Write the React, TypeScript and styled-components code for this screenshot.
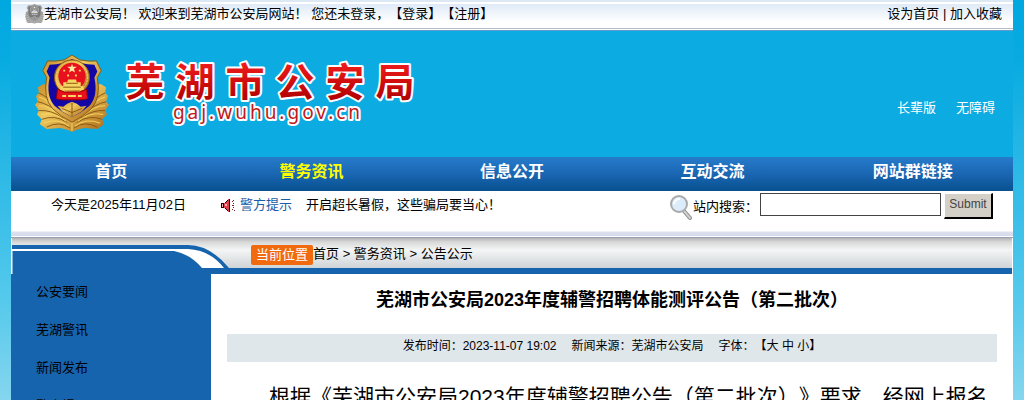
import React from 'react';
import styled, { createGlobalStyle } from 'styled-components';

const sans = '"Liberation Sans", "Noto Sans CJK SC", sans-serif';

const GlobalStyle = createGlobalStyle`
  * { box-sizing: border-box; }
  body {
    margin: 0;
    height: 100vh;
    overflow: hidden;
    font: 13px/20px ${sans};
    text-spacing-trim: space-all;
    color: #000;
    background: linear-gradient(#00a8e0 0, #08abe1 60px, #55c9ec 300px, #8fd8ef 420px);
  }
  a { color: inherit; text-decoration: none; }
  h1, p, ul { margin: 0; padding: 0; }
  li { list-style: none; }
`;

const Page = styled.div`
  margin: 0 11px;
  background: #fff;
`;

const TopBar = styled.div`
  display: flex;
  align-items: flex-start;
  height: 31px;
  padding: 4px 11px 0 14px;
  border-bottom: 1px solid #5b9fd0;
  background:
    linear-gradient(#b9bcc4, #b9bcc4) 0 28px / 100% 1px no-repeat,
    linear-gradient(#dce9f5 0, #dce9f5 2px, #fff 2px, #fff 4px, #dfeaf7 4px, #fff 22px);
`;

const TopLinks = styled.span`
  margin-left: auto;
`;

const Pre = styled.span`
  white-space: pre;
`;

const Banner = styled.header`
  display: flex;
  align-items: center;
  height: 126px;
  padding: 0 18px 0 24px;
  background: #0cabe2;
`;

const Wordmark = styled.svg`
  margin-left: 16px;
  overflow: visible;
`;

const Modes = styled.div`
  display: flex;
  gap: 20px;
  margin: 28px 0 0 auto;
  color: #fff;
`;

const Nav = styled.nav`
  display: flex;
  height: 34px;
  background: linear-gradient(#267ccb, #1a66b2 50%, #07518f);
`;

const NavLink = styled.a<{ $active?: boolean }>`
  && { color: ${p => (p.$active ? '#ff0' : '#fff')}; }
  flex: 1;
  text-align: center;
  font-size: 16px;
  font-weight: 700;
  line-height: 30px;
`;

const InfoBar = styled.div`
  display: flex;
  align-items: flex-start;
  height: 47px;
  padding: 4px 20px 0 40px;
  border-bottom: 1px solid #9aa0b4;
  background:
    linear-gradient(#fff, #fff) 0 45px / 100% 1px no-repeat,
    linear-gradient(#fff 40px, #dde1ee 41px, #d3d8ea);
`;

const Tip = styled.div`
  display: flex;
  align-items: center;
  margin-left: 34px;
`;

const TipLabel = styled.a`
  && { color: #1a5ca8; }
  margin: 0 14px 0 4px;
`;

const Search = styled.form`
  display: flex;
  align-items: flex-start;
  margin-left: auto;
`;

const SearchLabel = styled.label`
  margin-top: 2px;
`;

const SearchInput = styled.input`
  width: 181px;
  height: 23px;
  margin: -2px 3px 0 2px;
  border: 1px solid #444;
  background: #fff;
  font: inherit;
`;

const SubmitButton = styled.button`
  width: 49px;
  height: 26px;
  margin-top: -2px;
  padding: 0 0 4px;
  border: 1px solid;
  border-width: 1px 2px 2px 1px;
  border-color: #fff #000 #000 #fff;
  background: #d4d0c8;
  color: #444;
  font: 12px/18px ${sans};
`;

const Crumbs = styled.div`
  display: flex;
  height: 36px;
  margin: 0 1px;
  border-bottom: 6px solid #1764ae;
  background: linear-gradient(#b4b4b4 0, #d8d8d8 4px, #f4f5f5 12px, #cfd4d7 30px);
`;

const Swoosh = styled.svg`
  flex: none;
  width: 239px;
  height: 36px;
  margin-bottom: -6px;
`;

const Here = styled.span`
  align-self: flex-start;
  margin-top: 7px;
  padding: 0 5px;
  border-radius: 2px;
  background: #f26a10;
  color: #fff;
`;

const Trail = styled.span`
  padding-top: 6px;
`;

const Body = styled.div`
  display: flex;
`;

const Side = styled.ul`
  flex: none;
  width: 200px;
  background: #1764ae;
`;

const SideItem = styled.li`
  padding: 8px 25px 10px;
`;

const Article = styled.article`
  flex: 1;
  min-width: 0;
  padding: 0 16px;
`;

const Title = styled.h1`
  padding: 11px 0 19px;
  text-align: center;
  font-size: 18px;
  line-height: 30px;
`;

const Meta = styled.div`
  display: flex;
  justify-content: center;
  gap: 15px;
  height: 28px;
  background: #e0e7ea;
  font-size: 12px;
  line-height: 24px;
`;

const Text = styled.p`
  margin-top: 14px;
  text-indent: 2em;
  font-size: 21px;
  line-height: 42px;
`;

const Emblem = ({ size, gray }: { size: [number, number]; gray?: boolean }) => {
  const gold = gray ? '#a4a4a4' : 'url(#gold)';
  const dark = gray ? '#777' : '#8a5812';
  const red = gray ? '#8c8c8c' : '#e8101c';
  const light = gray ? '#eee' : '#f6d660';
  return (
    <svg width={size[0]} height={size[1]} viewBox="0 0 76 80" aria-hidden="true">
      <defs>
        <linearGradient id="gold" x1="0" y1="0" x2="1" y2="1">
          <stop offset="0" stopColor="#c68b28" />
          <stop offset=".4" stopColor="#eec75e" />
          <stop offset="1" stopColor="#a86516" />
        </linearGradient>
      </defs>
      <path
        d="M8 30L3 33 4 39 1 42 3 48 0 51 4 57 2 61 7 66 5 71 12 76 26 75 34 77 38 79 42 77 50 75 64 76 71 71 69 66 74 61 72 57 76 51 73 48 75 42 72 39 73 33 68 30Z"
        fill={gold}
      />
      <g stroke={dark} strokeWidth="1" fill="none">
        <path d="M4 39Q14 43 22 54M3 48Q14 50 25 60M4 57Q17 56 29 65M7 66Q20 61 33 69M72 39Q62 43 54 54M73 48Q62 50 51 60M72 57Q59 56 47 65M69 66Q56 61 43 69M12 74Q25 67 36 75M64 74Q51 67 40 75" />
      </g>
      <g stroke={light} strokeWidth="1" fill="none">
        <path d="M4 43Q14 46 22 57M4 52Q16 52 27 63M6 61Q20 58 32 68M9 70Q23 64 35 73M72 43Q62 46 54 57M72 52Q60 52 49 63M70 61Q56 58 44 68M67 70Q53 64 41 73M38 66V78" />
      </g>
      <path
        d="M38 0L46 5Q56 7 63 6L68 16 64 23Q68 44 58 55Q50 63 38 69Q26 63 18 55Q8 44 12 23L8 16 13 6Q20 7 30 5Z"
        fill={gold}
        stroke={dark}
        strokeWidth="1"
      />
      <path
        d="M38 4L46 8Q54 10 61 10L64 17 61 23Q65 42 56 52Q48 59 38 64Q28 59 20 52Q11 42 15 23L12 17 15 10Q22 10 30 8Z"
        fill={gray ? '#777' : '#1206a4'}
      />
      <path d="M23 52L29 53 33 50 38 48 43 50 47 53 53 52 48 58 38 64 28 58Z" fill={gold} />
      <path d="M28 55L38 59 48 55M38 49V63" stroke={dark} strokeWidth="1" fill="none" />
      <circle cx="38" cy="23" r="18" fill={gold} stroke={dark} strokeWidth="1" />
      <circle cx="38" cy="23" r="16" fill="none" stroke={light} strokeWidth="1" strokeDasharray="2 1" />
      <circle cx="38" cy="22" r="14" fill={red} />
      <path d="M38 9l1 3h4l-3 2 1 4-3-2-3 2 1-4-3-2h4z" fill={gray ? '#eee' : '#ffe9a0'} />
      <path d="M29 15h2v2h-2zM45 15h2v2h-2zM33 20h2v2h-2zM41 20h2v2h-2z" fill={light} />
      <path d="M34 25h8l1 3h4v4h3v4H26v-4h3v-4h4z" fill={light} />
      <path d="M32 29h12M29 33h18" stroke={dark} strokeWidth="1" />
      <path d="M23 35l7 3h16l7-3 1 10-6 1H28l-6-1z" fill={red} stroke={gray ? '#777' : '#900'} />
      <path d="M28 42h4M34 42h8M44 42h4" stroke={light} strokeWidth="2" />
    </svg>
  );
};

const Speaker = () => (
  <svg width="16" height="16" viewBox="0 0 16 16" shapeRendering="crispEdges" aria-hidden="true">
    <path d="M1 6h3l4-4h2v13H8l-4-4H1z" fill="#e0404c" />
    <path d="M1 6h3v5H1zM9 2h1v13H9zM7 3h1v1H7zM6 4h1v1H6zM5 5h1v1H5zM5 11h1v1H5zM6 12h1v1H6zM7 13h1v1H7z" fill="#200" />
    <path d="M2 7h1v3H2zM5 7h2v2H5z" fill="#f6b4b4" />
    <path d="M12 4h1v1h-1zM12 8h2v1h-2zM12 12h1v1h-1zM13 3h1v1h-1zM14 13h1v1h-1zM13 6h1v1h-1zM13 10h1v1h-1z" fill="#702020" />
  </svg>
);

const Lens = () => (
  <svg width="24" height="26" viewBox="0 0 24 26" aria-hidden="true">
    <path d="M15 16l6 7" stroke="#8a8a8a" strokeWidth="4" strokeLinecap="round" />
    <path d="M15 16l6 7" stroke="#d0d0d0" strokeWidth="2" strokeLinecap="round" />
    <circle cx="10" cy="9" r="8" fill="#dcecfa" stroke="#aaa" strokeWidth="2" />
    <path d="M5 9q1-5 6-5" stroke="#fff" strokeWidth="2" fill="none" />
  </svg>
);

const navItems = ['首页', '警务资讯', '信息公开', '互动交流', '网站群链接'];
const sideItems = ['公安要闻', '芜湖警讯', '新闻发布', '警方提示'];

export default function App() {
  return (
    <>
      <GlobalStyle />
      <Page>
        <TopBar>
          <Emblem size={[19, 20]} gray />
          <Pre>芜湖市公安局！ 欢迎来到芜湖市公安局网站！ 您还未登录，<a href="#login">【登录】</a><a href="#register">【注册】</a></Pre>
          <TopLinks><a href="#home">设为首页</a> | <a href="#favorite">加入收藏</a></TopLinks>
        </TopBar>
        <Banner>
          <Emblem size={[74, 80]} />
          <Wordmark width="300" height="80" viewBox="0 0 300 80">
            <defs>
              <linearGradient id="red" x1="0" y1="0" x2="0" y2="1">
                <stop offset=".2" stopColor="#f01c1c" />
                <stop offset=".9" stopColor="#b00000" />
              </linearGradient>
            </defs>
            <g fill="url(#red)" stroke="#fff" strokeWidth="4" strokeLinejoin="round" paintOrder="stroke" textAnchor="middle">
              <g fontFamily='"Noto Sans CJK SC", sans-serif' fontWeight="700" fontSize="39">
                {[...'芜湖市公安局'].map((c, i) => (
                  <text key={i} x={20 + i * 50} y="42">{c}</text>
                ))}
              </g>
              <text x="143" y="65" fontFamily='"Noto Sans", sans-serif' fontSize="19" fill="#c01818" letterSpacing="3">
                gaj.wuhu.gov.cn
              </text>
            </g>
          </Wordmark>
          <Modes><a href="#elder">长辈版</a><a href="#accessible">无障碍</a></Modes>
        </Banner>
        <Nav>
          {navItems.map((n, i) => <NavLink key={n} href="#nav" $active={i === 1}>{n}</NavLink>)}
        </Nav>
        <InfoBar>
          <span>今天是2025年11月02日</span>
          <Tip>
            <Speaker />
            <TipLabel href="#tips">警方提示</TipLabel>
            <a href="#notice">开启超长暑假，这些骗局要当心！</a>
          </Tip>
          <Search onSubmit={e => e.preventDefault()}>
            <Lens />
            <SearchLabel htmlFor="q">站内搜索：</SearchLabel>
            <SearchInput id="q" type="text" />
            <SubmitButton type="submit">Submit</SubmitButton>
          </Search>
        </InfoBar>
        <Crumbs>
          <Swoosh viewBox="0 0 239 36" aria-hidden="true">
            <path d="M0 7H176Q198 7 217 30H239V36H0Z" fill="#1764ae" />
            <path d="M0 11H176Q198 12 212 30H190Q178 16 162 13H0Z" fill="#fff" />
            <path d="M0 13V36" stroke="#fff" />
          </Swoosh>
          <Here>当前位置</Here>
          <Trail><a href="#home">首页</a> &gt; <a href="#news">警务资讯</a> &gt; <a href="#notices">公告公示</a></Trail>
        </Crumbs>
        <Body>
          <Side>
            {sideItems.map(s => <SideItem key={s}><a href="#side">{s}</a></SideItem>)}
          </Side>
          <Article>
            <Title>芜湖市公安局2023年度辅警招聘体能测评公告（第二批次）</Title>
            <Meta>
              <span>发布时间：2023-11-07 19:02</span>
              <span>新闻来源：芜湖市公安局</span>
              <span>字体：【<a href="#large">大</a> <a href="#medium">中</a> <a href="#small">小</a>】</span>
            </Meta>
            <Text>根据《芜湖市公安局2023年度辅警招聘公告（第二批次）》要求，经网上报名</Text>
          </Article>
        </Body>
      </Page>
    </>
  );
}
